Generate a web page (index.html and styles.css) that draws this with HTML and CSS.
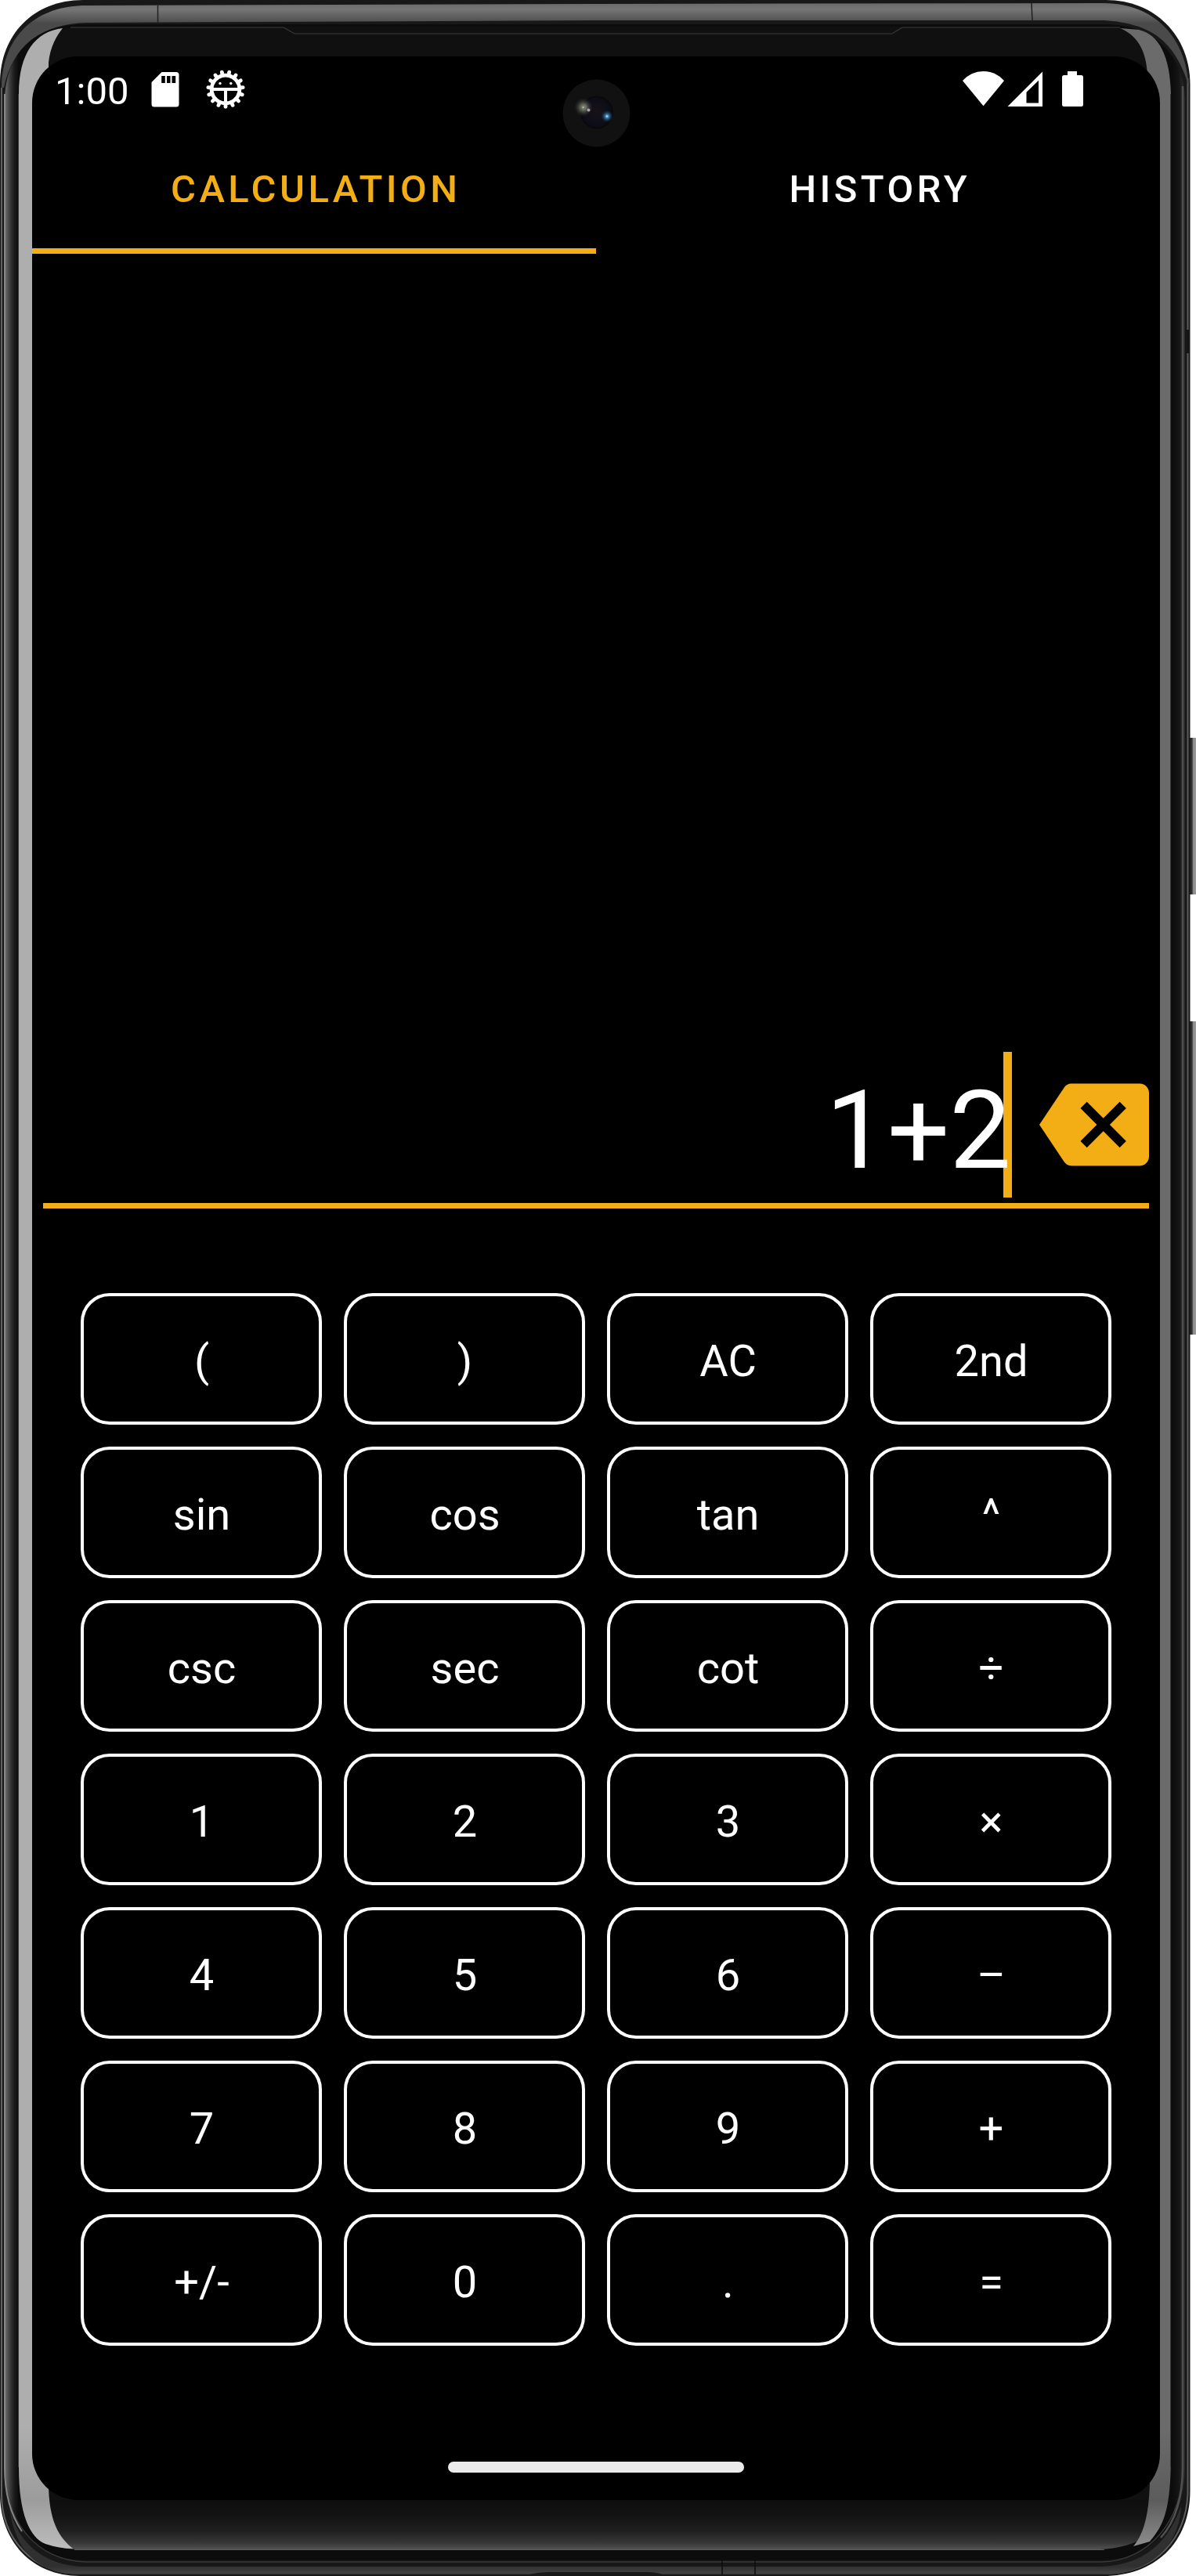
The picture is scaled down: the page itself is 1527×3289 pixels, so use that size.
FILE: index.html
```html
<!DOCTYPE html>
<html lang="en">
<head>
<meta charset="utf-8">
<title>Calculator</title>
<link rel="stylesheet" href="styles.css">
</head>
<body>
<div class="phone">
  <svg class="phone-frame" width="1527" height="3289" viewBox="0 0 1527 3289" aria-hidden="true">
    <defs>
      <linearGradient id="topBand" x1="0" y1="4" x2="0" y2="30" gradientUnits="userSpaceOnUse">
        <stop offset="0" stop-color="#6a6a6a"/><stop offset=".3" stop-color="#767676"/><stop offset="1" stop-color="#4a4a4a"/>
      </linearGradient>
      <linearGradient id="side" x1="7" y1="0" x2="1512" y2="0" gradientUnits="userSpaceOnUse">
        <stop offset="0" stop-color="#6a6a6a"/><stop offset=".003" stop-color="#444"/><stop offset=".007" stop-color="#1e1e1e"/><stop offset=".011" stop-color="#0c0c0c"/><stop offset=".99" stop-color="#0c0c0c"/><stop offset=".995" stop-color="#141414"/><stop offset="1" stop-color="#2c2c2c"/>
      </linearGradient>
      <linearGradient id="chin" x1="0" y1="3192" x2="0" y2="3256" gradientUnits="userSpaceOnUse">
        <stop offset="0" stop-color="#0e0e0e"/><stop offset=".3" stop-color="#131313"/><stop offset=".6" stop-color="#1e1e1e"/><stop offset=".85" stop-color="#363636"/><stop offset="1" stop-color="#555"/>
      </linearGradient>
      <linearGradient id="rim" x1="0" y1="3277" x2="0" y2="3289" gradientUnits="userSpaceOnUse">
        <stop offset="0" stop-color="#303030"/><stop offset=".7" stop-color="#424242"/><stop offset="1" stop-color="#1c1c1c"/>
      </linearGradient>
      <linearGradient id="shine" x1="0" y1="3100" x2="0" y2="3254" gradientUnits="userSpaceOnUse">
        <stop offset="0" stop-color="#aeaeae"/><stop offset=".6" stop-color="#9c9c9c"/><stop offset="1" stop-color="#bdbdbd"/>
      </linearGradient>
      <linearGradient id="shineRight" x1="0" y1="3100" x2="0" y2="3254" gradientUnits="userSpaceOnUse">
        <stop offset="0" stop-color="#6b6b6b"/><stop offset=".6" stop-color="#5c5c5c"/><stop offset="1" stop-color="#909090"/>
      </linearGradient>
      <linearGradient id="sideKey" x1="1518" y1="0" x2="1527" y2="0" gradientUnits="userSpaceOnUse">
        <stop offset="0" stop-color="#1c1c1c"/><stop offset=".45" stop-color="#333"/><stop offset=".6" stop-color="#8a8a8a"/><stop offset="1" stop-color="#9a9a9a"/>
      </linearGradient>
      <radialGradient id="lens"><stop offset="0" stop-color="#17121a"/><stop offset=".8" stop-color="#0d0d18"/><stop offset="1" stop-color="#080808"/></radialGradient>
      <radialGradient id="glowBlue"><stop offset="0" stop-color="#d8f0ff"/><stop offset=".25" stop-color="#3d84b8"/><stop offset="1" stop-color="#0b2740" stop-opacity="0"/></radialGradient>
      <radialGradient id="glowWarm"><stop offset="0" stop-color="#eceedd"/><stop offset=".3" stop-color="#8b927c"/><stop offset="1" stop-color="#30352a" stop-opacity="0"/></radialGradient>
    </defs>
    <!-- volume and power keys -->
    <rect x="1516" y="942" width="14" height="200" rx="4" fill="url(#sideKey)"/>
    <rect x="1516" y="1304" width="14" height="400" rx="4" fill="url(#sideKey)"/>
    <!-- metal body -->
    <path d="M0 106C0 45 42 0 106 0H1412C1474 0 1519.500 45 1519.500 108V3180C1519.500 3247 1474 3289 1408 3289H102C40 3289 0 3244 0 3184Z" fill="#181818"/>
    <path d="M2 112V3184C2 3240 40 3286 104 3286" fill="none" stroke="#606060" stroke-width="2"/>
    <path d="M1516.500 100V3184C1514 3240 1478 3284 1412 3286" fill="none" stroke="#5c5c5c" stroke-width="2"/>
    <path d="M12 3200C22 3250 60 3277 110 3277H1400C1450 3277 1488 3256 1508 3200C1506 3252 1466 3287 1408 3287H102C50 3287 18 3258 12 3200Z" fill="url(#rim)"/>
    <path d="M2 112C3 44 48 7 110 7L760 5L1410 4C1475 5 1514 48 1518 110C1500 52 1470 30 1410 26H760L110 29C55 30 16 58 5 112Z" fill="url(#topBand)"/>
    <path d="M201.500 7V29M1317 4L1318 26" stroke="#202020" stroke-width="1.500"/>
    <path d="M6 130C6 66 46 31 106 31H1412C1470 31 1513 68 1513 130V3150C1513 3222 1470 3269 1404 3269H108C46 3269 6 3222 6 3150Z" fill="url(#side)"/>
    <path d="M6 120V3150C6 3220 46 3268 108 3271H1408C1466 3269 1510 3220 1510 3150V120" fill="none" stroke="#393939" stroke-width="1.500"/>
    <path d="M6 120V3150C6 3180 13 3210 28 3232" fill="none" stroke="#868686" stroke-width="2"/>
    <path d="M1510 110V3150C1510 3190 1500 3220 1482 3240" fill="none" stroke="#505050" stroke-width="2.500"/>
    <path d="M26 110C30 60 60 34 108 34H1408C1460 34 1490 60 1494 110V3160C1494 3230 1455 3255 1390 3255H110C50 3255 24 3230 24 3160Z" fill="#101010"/>
    <path d="M30 3192H1488C1484 3236 1450 3255.500 1390 3255.500H110C60 3255.500 36 3240 30 3192Z" fill="url(#chin)"/>
    <path d="M90 35H362L376 43H1139L1152 35H1430" fill="none" stroke="#3a3a3a" stroke-width="1.200"/>
    <path d="M95 3255.500H1410" stroke="#5a5a5a" stroke-width="1"/>
    <!-- reflections down both edges -->
    <path d="M80 36C45 40 24 68 24 120V3150C24 3210 38 3240 58 3248Q76 3254 93 3254C76 3240 62 3220 62 3170V80C64 60 72 46 80 36Z" fill="url(#shine)"/>
    <path d="M1430 36C1455 46 1465 70 1465 100L1468 3170C1467 3205 1462 3234 1447 3251L1468 3245C1488 3222 1495 3200 1495 3130V120C1494 72 1480 44 1454 38Z" fill="url(#shineRight)"/>
    <path d="M23.500 120V3150M1494.500 120V3150" stroke="#3a3a3a" stroke-width="1"/>
    <!-- antenna gaps and port -->
    <path d="M1516 421V451" stroke="#161616" stroke-width="5"/>
    <path d="M922 3257V3287M964 3257V3287" stroke="#0c0c0c" stroke-width="1.500"/>
    <path d="M676 3287Q688 3284 700 3284H825Q838 3284 846 3287Z" fill="#181818"/>
  </svg>

  <main class="screen">
    <svg class="camera" width="88" height="88" viewBox="0 0 88 88" aria-hidden="true">
      <circle cx="44.500" cy="44.500" r="43" fill="#111"/>
      <circle cx="45" cy="43.500" r="21" fill="url(#lens)"/>
      <circle cx="28" cy="37" r="12" fill="url(#glowWarm)" opacity=".7"/>
      <circle cx="27.500" cy="37" r="3.500" fill="url(#glowWarm)"/>
      <circle cx="34.500" cy="40.500" r="2" fill="#b69ab5"/>
      <circle cx="58" cy="48.500" r="8" fill="url(#glowBlue)"/>
    </svg>

    <header class="status-bar">
      <span class="clock">1:00</span>
      <svg class="icon-sd" width="36" height="46" viewBox="0 0 36 46"><path fill="#fff" fill-rule="evenodd" d="M13.500 1H32Q35.500 1 35.500 4.500V42Q35.500 45.500 32 45.500H4Q.5 45.500 .5 42V14ZM13.200 6V15H17.800V6ZM20 6V15H24.500V6ZM26.500 6V15H31.200V6Z"/></svg>
      <svg class="icon-bug" width="50" height="50" viewBox="-25 -25 50 50">
        <g stroke="#fff" stroke-width="4.800" stroke-linecap="round">
          <path id="tooth" d="M0 18V22.300"/>
          <use href="#tooth" transform="rotate(24)"/><use href="#tooth" transform="rotate(48)"/><use href="#tooth" transform="rotate(72)"/><use href="#tooth" transform="rotate(96)"/><use href="#tooth" transform="rotate(120)"/><use href="#tooth" transform="rotate(144)"/><use href="#tooth" transform="rotate(168)"/><use href="#tooth" transform="rotate(192)"/><use href="#tooth" transform="rotate(216)"/><use href="#tooth" transform="rotate(240)"/><use href="#tooth" transform="rotate(264)"/><use href="#tooth" transform="rotate(288)"/><use href="#tooth" transform="rotate(312)"/><use href="#tooth" transform="rotate(336)"/>
        </g>
        <circle r="17.900" fill="none" stroke="#fff" stroke-width="4.800"/>
        <path d="M-16 0H16M0 0V17" stroke="#fff" stroke-width="4"/>
        <circle cx="-7" cy="-7.500" r="1.700" fill="#fff"/><circle cx="6.800" cy="-7.500" r="1.700" fill="#fff"/>
      </svg>
      <span class="status-gap"></span>
      <svg class="icon-wifi" width="54" height="46" viewBox="0 0 54 46"><path fill="#fff" d="M0 13Q11 1 26.500 1T53 13L26.500 45.300Z"/></svg>
      <svg class="icon-signal" width="45" height="46" viewBox="0 0 45 46"><path fill="#fff" fill-rule="evenodd" d="M.5 46L45 1.500V46ZM24.500 41.500H40V12.800L24.500 27.800Z"/></svg>
      <svg class="icon-battery" width="27" height="46" viewBox="0 0 27 46"><path fill="#fff" d="M7 1H19V6H24.500Q27 6 27 8.500V43.500Q27 46 24.500 46H2.500Q0 46 0 43.500V8.500Q0 6 2.500 6H7Z"/></svg>
    </header>

    <nav class="tabs">
      <span class="tab tab-active">CALCULATION</span>
      <span class="tab">HISTORY</span>
    </nav>

    <section class="display">
      <div class="entry"><span class="entry-text">1+2</span></div>
      <svg class="backspace" width="140" height="140" viewBox="0 0 24 24"><path fill="#f2ae14" d="M22 3H7c-.69 0-1.230.35-1.590.88L0 12l5.410 8.110c.36.53.9.89 1.590.89h15c1.100 0 2-.9 2-2V5c0-1.100-.9-2-2-2zm-3 12.590L17.590 17 14 13.410 10.410 17 9 15.590 12.590 12 9 8.410 10.410 7 14 10.590 17.590 7 19 8.410 15.410 12 19 15.590z"/></svg>
    </section>

    <section class="keypad">
      <button class="key">(</button><button class="key">)</button><button class="key">AC</button><button class="key">2nd</button>
      <button class="key">sin</button><button class="key">cos</button><button class="key">tan</button><button class="key">^</button>
      <button class="key">csc</button><button class="key">sec</button><button class="key">cot</button><button class="key">÷</button>
      <button class="key">1</button><button class="key">2</button><button class="key">3</button><button class="key">×</button>
      <button class="key">4</button><button class="key">5</button><button class="key">6</button><button class="key">–</button>
      <button class="key">7</button><button class="key">8</button><button class="key">9</button><button class="key">+</button>
      <button class="key">+/-</button><button class="key">0</button><button class="key">.</button><button class="key">=</button>
    </section>

    <div class="home-bar"></div>
  </main>
</div>
</body>
</html>
```
FILE: styles.css
```css
* { box-sizing: border-box; }

body {
  margin: 0;
  background: #fff;
  font-family: Roboto, "Liberation Sans", sans-serif;
  color: #fff;
}

svg { display: block; flex: none; }

.phone {
  position: relative;
  width: 1527px;
  height: 3289px;
  padding: 72px 46px 97px 41px;
  overflow: hidden;
}

.phone-frame {
  position: absolute;
  inset: 0;
}

.screen {
  position: relative;
  display: flex;
  flex-direction: column;
  width: 1440px;
  height: 3120px;
  background: #000;
  border-radius: 59px;
  overflow: hidden;
}

.camera {
  position: absolute;
  left: 676px;
  top: 28px;
}

.status-bar {
  display: flex;
  align-items: flex-start;
  height: 98px;
  padding: 19px 98px 0 29px;
}

.clock {
  width: 123px;
  padding-top: 1px;
  font-size: 49px;
  line-height: 50px;
}

.icon-bug { margin: -2px 0 0 33.5px; }
.status-gap { flex: 1; }
.icon-signal { margin-left: 3px; }
.icon-battery { margin-left: 25px; }

.icon-signal, .icon-wifi, .icon-battery { margin-top: -1px; }

.tabs {
  display: flex;
  height: 154px;
}

.tab {
  flex: 1;
  padding-top: 42px;
  border-bottom: 7px solid transparent;
  font-size: 49px;
  font-weight: 500;
  line-height: 60px;
  letter-spacing: 4.38px;
  text-indent: 4.38px;
  text-align: center;
}

.tab-active {
  color: #f2ae14;
  border-bottom-color: #f2ae14;
}

.display {
  display: flex;
  align-items: flex-start;
  height: 200px;
  margin: 1019px 14px 108px;
  border-bottom: 7.5px solid #f2ae14;
}

.entry {
  flex: 1;
  margin-right: 35px;
  height: 186px;
  text-align: right;
  font-size: 140px;
  line-height: 200px;
  background: linear-gradient(#f2ae14, #f2ae14) right / 11px 100% no-repeat;
}

.entry-text { padding-right: 1px; }

.backspace { margin-top: 23px; }

.keypad {
  display: grid;
  grid-template-columns: repeat(4, 308px);
  grid-auto-rows: 168px;
  gap: 28px;
  padding: 0 62px;
}

.key {
  padding: 5px 0 0 1px;
  border: 4px solid #fff;
  border-radius: 37px;
  background: none;
  color: inherit;
  font: 56px/66px Roboto, "Liberation Sans", sans-serif;
}

.home-bar {
  width: 378px;
  height: 14px;
  margin: 148px 0 0 531px;
  border-radius: 7px;
  background: #ebebeb;
}
```
